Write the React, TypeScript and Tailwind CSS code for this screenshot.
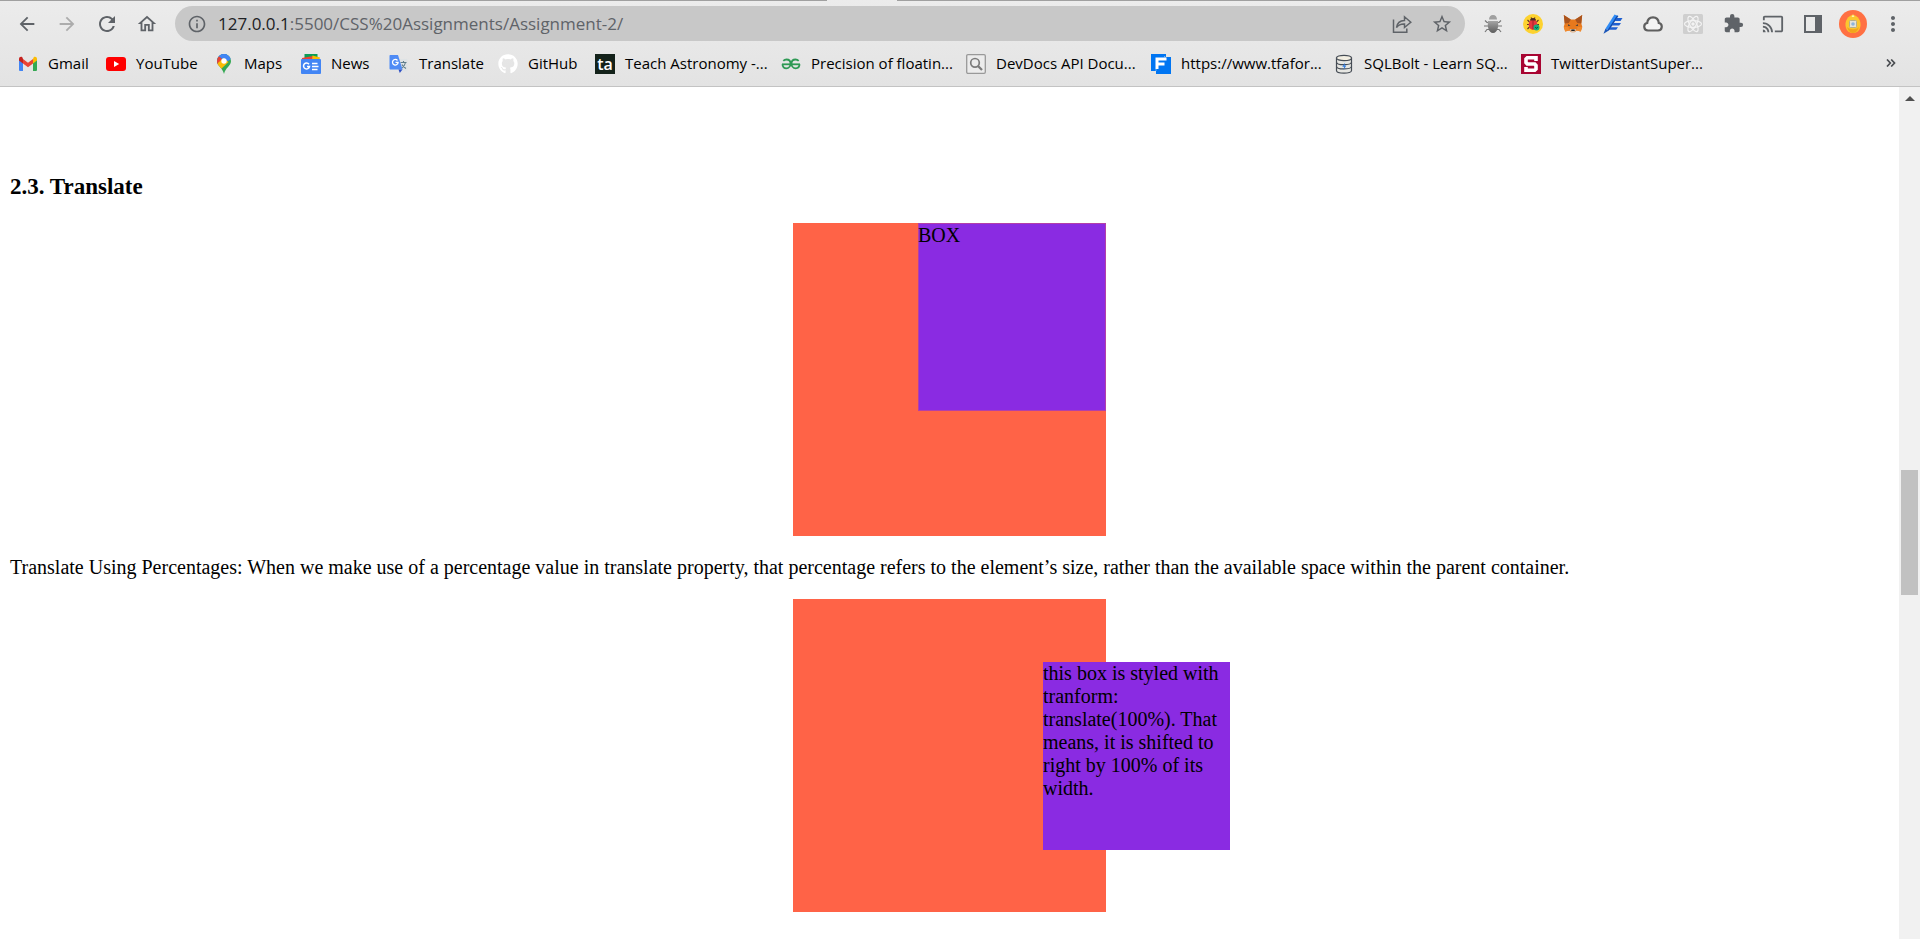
import type { ReactNode } from "react";
import {
  MdArrowBack,
  MdArrowForward,
  MdCast,
  MdExtension,
  MdMoreVert,
  MdOutlineHome,
  MdOutlineInfo,
  MdRefresh,
  MdStarOutline,
} from "react-icons/md";
import { FaGithub } from "react-icons/fa";

function ToolButton({ label, children, dim }: { label: string; children: ReactNode; dim?: boolean }) {
  return (
    <button
      type="button"
      aria-label={label}
      className={`flex h-9 w-10 shrink-0 items-center justify-center ${dim ? "text-[#acacac]" : "text-[#5f6368]"}`}
    >
      {children}
    </button>
  );
}

const ShareIcon = () => (
  <svg width="20" height="20" viewBox="0 0 20 20" fill="none" stroke="#5f6368" strokeWidth="1.5">
    <path d="M1.5 5.5v12.7h13.3v-3.7" />
    <path d="M4.5 13.5c.6-4.300 3-6.800 8-7V2.800l6.300 5.400-6.300 5.300V10c-3.500-.2-5.900.7-8 3.500z" strokeLinejoin="miter" />
  </svg>
);

const BugIcon = () => (
  <svg width="20" height="20" viewBox="0 0 20 20">
    <defs>
      <linearGradient id="bugBody" x1="0" y1="0" x2="0" y2="1">
        <stop offset="0" stopColor="#a5a5a5" />
        <stop offset="1" stopColor="#5c5c5c" />
      </linearGradient>
    </defs>
    <path d="M2 6.500l2 2h3M18 6.500l-2 2h-3M1 12h18M2 18l2-2.500h3M18 18l-2-2.500h-3" fill="none" stroke="#777" strokeWidth="1.2" />
    <path d="M6 5.500C6 3 7.500 1 10 1s4 2 4 4.500z" fill="#a0a0a0" />
    <path d="M5 7h10c.8 5-.4 12-5 12S4.200 12 5 7z" fill="url(#bugBody)" />
  </svg>
);

const LadybugIcon = () => (
  <svg width="20" height="20" viewBox="0 0 20 20">
    <circle cx="10" cy="10" r="10" fill="#fdd22f" />
    <path d="M4.500 6l2 2M4 10.500h3M4.500 15l2-2M15.500 6l-2 2M16 10.500h-3M8 3.500l1 1.500M12 3.500l-1 1.500" stroke="#5b3324" strokeWidth="1.100" />
    <ellipse cx="10" cy="10.500" rx="4.300" ry="5.300" fill="#e5393f" />
    <path d="M7 6.500a3 2.500 0 0 1 6 0z" fill="#4a2b25" />
    <path d="M10 6.500v9" stroke="#8f2229" strokeWidth=".8" />
    <circle cx="13.500" cy="13.500" r="3" fill="#16b07c" />
    <path d="M12.300 13l1.200 1.500 1.300-1.500" fill="none" stroke="#075840" />
  </svg>
);

const FoxIcon = () => (
  <svg width="20" height="20" viewBox="0 0 20 20">
    <path d="M.8 1l7 4.500h4.400L19.200 1l-.9 8.500 1 3.500-1.500 4.500-4-1-2.300 1.800h-3l-2.300-1.800-4 1L.7 13l1-3.500z" fill="#e8791d" />
    <path d="M.8 1l7 4.500-2 3.500-4.100.5zM19.200 1l-7 4.500 2 3.500 4.100.5z" fill="#a9531d" />
    <path d="M.9 13h4.600l.7 3.500-4 1zM19.100 13h-4.600l-.7 3.500 4 1z" fill="#f08a2c" />
    <path d="M5 10.300l2.500 1.200-2.300.5zM15 10.300l-2.500 1.200 2.300.5z" fill="#2d3a45" />
    <path d="M6.500 15.500l2-.5h3l2 .5-2.300 2.700H8.800z" fill="#d8c3b0" />
    <path d="M8.500 15.500h3l.3 1.600H8.200z" fill="#1f1f1f" />
  </svg>
);

const PenIcon = () => (
  <svg width="20" height="20" viewBox="0 0 20 20">
    <path d="M10 4h9.500l-2 3H9zM8.500 9H18l-1.800 2.500H7.500zM6 13.300h9l-1.800 2.500H5z" fill="#1f5fd0" />
    <path d="M11.500.5l3.800 1.500-9.500 14.500-3.400-1.800z" fill="#2f8bf5" />
    <path d="M14 1.500l1.300.5-9.500 14.500-1.200-.6z" fill="#1448a8" />
    <path d="M2.400 14.700l3.400 1.800-5.300 3.300z" fill="#1b56b8" />
  </svg>
);

const CloudIcon = () => (
  <svg width="20" height="20" viewBox="0 0 20 20">
    <path
      d="M5 16.500a3.800 3.800 0 0 1-.8-7.500C4.500 5.300 6.800 3.300 10 3.300s5.500 2 5.800 5.700a3.800 3.800 0 0 1-.8 7.500z"
      fill="#f4f4f4"
      stroke="#5f5f5f"
      strokeWidth="2.200"
    />
  </svg>
);

const AtomIcon = () => (
  <svg width="20" height="20" viewBox="0 0 20 20">
    <rect width="20" height="20" rx="1.500" fill="#cfcfcf" />
    <g fill="none" stroke="#f3f3f3" strokeWidth="1.200">
      <ellipse cx="10" cy="10" rx="8.500" ry="3.300" />
      <ellipse cx="10" cy="10" rx="8.500" ry="3.300" transform="rotate(60 10 10)" />
      <ellipse cx="10" cy="10" rx="8.500" ry="3.300" transform="rotate(120 10 10)" />
    </g>
    <circle cx="10" cy="10" r="1.700" fill="#f3f3f3" />
  </svg>
);

const SidePanelIcon = () => (
  <svg width="18" height="18" viewBox="0 0 18 18">
    <path d="M0 0h18v18H0zM2 2v14h9V2z" fill="#5f6368" fillRule="evenodd" />
  </svg>
);

const AvatarIcon = () => (
  <svg width="28" height="28" viewBox="0 0 28 28">
    <circle cx="14" cy="14" r="14" fill="#ff7043" />
    <path d="M14 4.500c5 1.500 8 6 7.500 11S18 23 14 23s-7-2.500-7.500-7.500S9 6 14 4.500z" fill="#fbc62f" />
    <path d="M14 4.500l1.500 2.500h-3z" fill="#fff1ae" />
    <path d="M8 17c1 4 3.500 6 6 6s5-2 6-6c-3 3-9 3-12 0z" fill="#f2a51d" />
    <rect x="10.500" y="10.500" width="7" height="7" rx="1" fill="#e6e3d8" stroke="#b5ae8c" />
    <circle cx="14" cy="14" r="1.800" fill="#8db4dc" />
  </svg>
);

const GmailIcon = () => (
  <svg width="20" height="20" viewBox="0 0 20 20">
    <path d="M1 5v10.700c0 .7.500 1.300 1.300 1.300H5V8z" fill="#4285f4" />
    <path d="M15 17h2.700c.8 0 1.300-.6 1.300-1.300V5l-4 3z" fill="#34a853" />
    <path d="M15 5v4.500l4-3V5c0-2-2-2.800-3.300-1.700z" fill="#fbbc04" />
    <path d="M5 9.500V5l5 3.800L15 5v4.500l-5 3.800z" fill="#ea4335" />
    <path d="M1 5v1.500l4 3V5l-.7-1.700C3 2.200 1 3 1 5z" fill="#c5221f" />
  </svg>
);

const YouTubeIcon = () => (
  <svg width="20" height="20" viewBox="0 0 20 20">
    <rect y="3" width="20" height="14" rx="3" fill="#f00" />
    <path d="M8 7l5.200 3L8 13z" fill="#fff" />
  </svg>
);

const MapsIcon = () => (
  <svg width="20" height="20" viewBox="0 0 20 20">
    <defs>
      <clipPath id="pinShape">
        <path d="M10 0a7 7 0 0 1 7 7c0 5-5.500 6.500-7 13-1.500-6.500-7-8-7-13a7 7 0 0 1 7-7z" />
      </clipPath>
    </defs>
    <g clipPath="url(#pinShape)">
      <path d="M0 0h20v20H0z" fill="#34a853" />
      <path d="M3 12L16 -3 10 -3 0 4z" fill="#1a73e8" />
      <path d="M0 4.500L5.500 2 9.500 7 5 12H0z" fill="#ea4335" />
      <path d="M4 0h14l-1 5-4.500 3L5.300 2.500z" fill="#4285f4" />
      <path d="M2 10.500L9.500 4l5 4L6 16z" fill="#fbbc04" />
    </g>
    <circle cx="10" cy="7" r="2.700" fill="#fff" />
  </svg>
);

const NewsIcon = () => (
  <svg width="20" height="20" viewBox="0 0 20 20">
    <path d="M3.500 0h13v6h-13z" fill="#0c9d58" />
    <path d="M1 4l11-2 1 5H1z" fill="#ea4335" />
    <path d="M11.500 1.500L19 3.500 18 7h-7z" fill="#fbbc04" />
    <rect y="5" width="20" height="15" rx="1" fill="#4285f4" />
    <path d="M8 10.200A3 3 0 1 0 8.500 12.500H6" fill="none" stroke="#fff" strokeWidth="1.500" />
    <path d="M11 9.500h5.500M11 12.500h6.500M11 15.500h5.500" stroke="#fff" strokeWidth="1.500" />
  </svg>
);

const TranslateIcon = () => (
  <svg width="20" height="20" viewBox="0 0 20 20">
    <path d="M8 5h10.500v12.500H11z" fill="#dfe3e5" />
    <path d="M11.500 8.500h6M14.500 7v1.500M16.500 8.500c-.5 2.500-2 4.500-4 5.800M13 10.500c.8 1.800 2.200 3 4 4" fill="none" stroke="#607d8b" strokeWidth="1.100" />
    <path d="M1.500 1H9l4.500 14.500h-12c-.6 0-1-.5-1-1V2c0-.6.400-1 1-1z" fill="#4f8bf5" />
    <path d="M9.500 15.500h4L10.800 19z" fill="#2f4fc4" />
    <path d="M8.500 6.500a2.800 2.800 0 1 0 .6 1.900H6.500" fill="none" stroke="#fff" strokeWidth="1.300" />
  </svg>
);

const AstronomyIcon = () => (
  <span className="flex size-5 items-center justify-center bg-[#14221a] text-base leading-5 font-semibold text-white">
    ta
  </span>
);

const GeeksIcon = () => (
  <svg width="20" height="20" viewBox="0 0 20 20" fill="none" stroke="#2f9a55" strokeWidth="1.800">
    <path d="M1 10.300h18" />
    <path d="M2.300 6.800c1-1 2-1.300 3.200-1.300 2.500 0 4 1.700 4 4s-1.500 4.800-4.200 4.800c-2.200 0-3.800-1.400-3.800-4" />
    <path d="M17.700 6.800c-1-1-2-1.300-3.200-1.300-2.500 0-4 1.700-4 4s1.500 4.800 4.200 4.800c2.200 0 3.800-1.400 3.800-4" />
  </svg>
);

const SearchTileIcon = () => (
  <svg width="20" height="20" viewBox="0 0 20 20" fill="none">
    <rect x=".7" y=".7" width="18.600" height="18.600" rx="1.200" fill="#ececec" stroke="#999" strokeWidth="1.300" />
    <circle cx="9" cy="8.800" r="4.300" stroke="#7b7b7b" strokeWidth="1.700" />
    <path d="M12 12l4 4" stroke="#7b7b7b" strokeWidth="2.300" />
  </svg>
);

const FormIcon = () => (
  <svg width="20" height="20" viewBox="0 0 20 20">
    <path d="M0 0h15v3h5v17H5v-3H0z" fill="#0075f2" />
    <path d="M15 3l-1.500 0v-1M5 17v-2" stroke="#66acf7" />
    <path d="M6 15V5h9.500M6 10h7.500" fill="none" stroke="#fff" strokeWidth="3" />
  </svg>
);

const DatabaseIcon = () => (
  <svg width="20" height="20" viewBox="0 0 20 20">
    <path d="M2.500 4v12.500c0 1.500 3.400 2.700 7.500 2.700s7.500-1.200 7.500-2.700V4z" fill="#e6e6e2" stroke="#454c55" strokeWidth="1.200" />
    <ellipse cx="10" cy="4" rx="7.500" ry="2.600" fill="#f2eee2" stroke="#454c55" strokeWidth="1.200" />
    <path d="M2.500 8.200c0 1.400 3.400 2.500 7.500 2.500s7.500-1.100 7.500-2.500M2.500 12.400c0 1.400 3.400 2.500 7.500 2.500s7.500-1.100 7.500-2.500" fill="none" stroke="#454c55" strokeWidth="1.200" />
    <path d="M11.200 8.500l-3 4.300h2l-.8 3.200 3-4.400h-2z" fill="#2f7be0" />
  </svg>
);

const SIcon = () => (
  <svg width="20" height="20" viewBox="0 0 20 20">
    <path d="M0 0h20v20H0z" fill="#a80532" />
    <path d="M15 7V3.700H6.300L5 5v3.500L6.300 10h7.400L15 11.500V15l-1.300 1.300H5V13" fill="none" stroke="#fff" strokeWidth="3.600" />
  </svg>
);

const bookmarks: { label: string; width: string; icon: ReactNode }[] = [
  { label: "Gmail", width: "w-[88px]", icon: <GmailIcon /> },
  { label: "YouTube", width: "w-[108px]", icon: <YouTubeIcon /> },
  { label: "Maps", width: "w-[87px]", icon: <MapsIcon /> },
  { label: "News", width: "w-[88px]", icon: <NewsIcon /> },
  { label: "Translate", width: "w-[109px]", icon: <TranslateIcon /> },
  { label: "GitHub", width: "w-[97px]", icon: <FaGithub size={20} color="#fff" /> },
  { label: "Teach Astronomy -...", width: "w-[186px]", icon: <AstronomyIcon /> },
  { label: "Precision of floatin...", width: "w-[185px]", icon: <GeeksIcon /> },
  { label: "DevDocs API Docu...", width: "w-[185px]", icon: <SearchTileIcon /> },
  { label: "https://www.tfafor...", width: "w-[183px]", icon: <FormIcon /> },
  { label: "SQLBolt - Learn SQ...", width: "w-[187px]", icon: <DatabaseIcon /> },
  { label: "TwitterDistantSuper...", width: "w-[186px]", icon: <SIcon /> },
];

function Toolbar() {
  return (
    <div className="flex h-[45px] items-center px-[7px]">
      <ToolButton label="Back"><MdArrowBack size={22} /></ToolButton>
      <ToolButton label="Forward" dim><MdArrowForward size={22} /></ToolButton>
      <ToolButton label="Reload"><MdRefresh size={24} /></ToolButton>
      <ToolButton label="Home"><MdOutlineHome size={22} /></ToolButton>
      <div className="mx-2 flex h-[35px] min-w-0 flex-1 items-center rounded-full bg-[#c8c8c8] pr-[3px] pl-3">
        <MdOutlineInfo size={20} color="#5f6368" className="shrink-0" />
        <a href="#page" className="ml-[11px] min-w-0 flex-1 truncate text-[17px] text-[#5f6368]">
          <span className="text-[#202124]">127.0.0.1</span>:5500/CSS%20Assignments/Assignment-2/
        </a>
        <ToolButton label="Share"><ShareIcon /></ToolButton>
        <ToolButton label="Bookmark this page"><MdStarOutline size={22} /></ToolButton>
      </div>
      <ToolButton label="Debugger"><BugIcon /></ToolButton>
      <ToolButton label="Bug reporter"><LadybugIcon /></ToolButton>
      <ToolButton label="Wallet"><FoxIcon /></ToolButton>
      <ToolButton label="Annotate"><PenIcon /></ToolButton>
      <ToolButton label="Cloud"><CloudIcon /></ToolButton>
      <ToolButton label="Developer tools"><AtomIcon /></ToolButton>
      <ToolButton label="Extensions"><MdExtension size={21} /></ToolButton>
      <ToolButton label="Cast"><MdCast size={22} /></ToolButton>
      <ToolButton label="Side panel"><SidePanelIcon /></ToolButton>
      <ToolButton label="Profile"><AvatarIcon /></ToolButton>
      <ToolButton label="Menu"><MdMoreVert size={24} /></ToolButton>
    </div>
  );
}

function BookmarksBar() {
  return (
    <nav aria-label="Bookmarks" className="flex h-9 items-center pr-6 pl-[18px]">
      {bookmarks.map((b) => (
        <a key={b.label} href="#page" className={`flex shrink-0 items-center gap-[10px] text-[15px] text-black ${b.width}`}>
          <span className="flex size-5 shrink-0 items-center justify-center">{b.icon}</span>
          <span className="pb-[2px] leading-5 whitespace-nowrap">{b.label}</span>
        </a>
      ))}
      <button type="button" aria-label="More bookmarks" className="ml-auto pb-[2px] text-[#4a4d51]">
        <svg width="10" height="8" viewBox="0 0 10 8" fill="none" stroke="currentColor" strokeWidth="1.700">
          <path d="M1 .5L4.300 4 1 7.500M5.200 .5L8.500 4 5.200 7.500" />
        </svg>
      </button>
    </nav>
  );
}

function Scrollbar() {
  return (
    <div className="flex w-[21px] shrink-0 flex-col items-center bg-[#f1f1f1]">
      <div className="flex h-[23px] items-center">
        <svg width="10" height="5" viewBox="0 0 10 5"><path d="M0 5L5 0l5 5z" fill="#505050" /></svg>
      </div>
      <div className="grow-[360] basis-0" />
      <div className="w-[17px] grow-[125] basis-0 bg-[#c1c1c1]" />
      <div className="grow-[321] basis-0" />
      <div className="h-[23px]" />
    </div>
  );
}

export default function App() {
  return (
    <div className="flex h-screen flex-col overflow-hidden bg-white">
      <header className="shrink-0 border-b border-[#c3c3c3] bg-linear-to-b from-[#ececec] to-[#e3e3e3] pb-1 font-['Open_Sans','Noto_Sans',sans-serif]">
        <div className="flex h-px">
          <div className="grow-[827] basis-0 bg-[#a0a0a0]" />
          <div className="w-[70px]" />
          <div className="grow-[1023] basis-0 bg-[#a0a0a0]" />
        </div>
        <Toolbar />
        <BookmarksBar />
      </header>
      <div className="flex min-h-0 flex-1">
        <main id="page" className="min-w-0 flex-1 overflow-hidden px-[10px] pt-[86px] font-['Liberation_Serif',serif] text-xl leading-[23px] text-black">
          <h3 className="mb-[23px] text-[23px] leading-[27px] font-bold">2.3. Translate</h3>
          <div className="mx-auto size-[313px] bg-[#ff6347] pl-[125px]">
            <div className="size-[188px] bg-[#8a2be2] pt-px shadow-[inset_0_0_0_1px_#b43fa8]">BOX</div>
          </div>
          <p className="my-5">
            Translate Using Percentages: When we make use of a percentage value in translate property, that percentage refers to the element’s size, rather than the available space within the parent container.
          </p>
          <div className="mx-auto flex size-[313px] items-center justify-center bg-[#ff6347]">
            <div className="h-[188px] w-[187px] shrink-0 translate-x-full bg-[#8a2be2]">
              this box is styled with tranform: translate(100%). That means, it is shifted to right by 100% of its width.
            </div>
          </div>
        </main>
        <Scrollbar />
      </div>
    </div>
  );
}
